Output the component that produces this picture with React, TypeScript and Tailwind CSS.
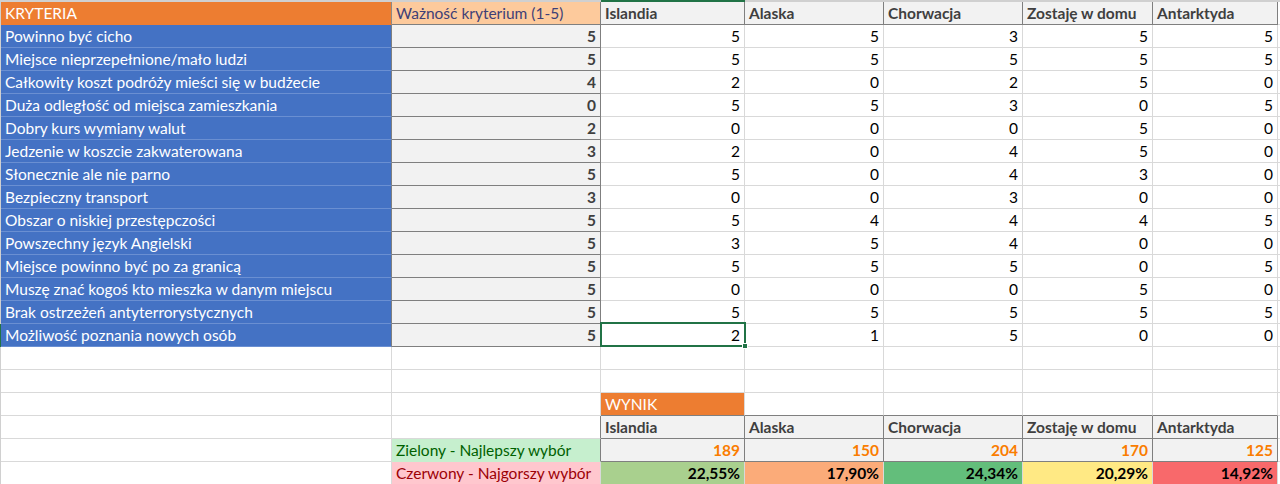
import React from "react";

// column widths incl. the 1px right border
const W = ["w-[391px]", "w-[209px]", "w-[144px]", "w-[139px]", "w-[139px]", "w-[130px]", "w-[125px]"];

const criteria: [string, number, number[]][] = [
  ["Powinno być cicho", 5, [5, 5, 3, 5, 5]],
  ["Miejsce nieprzepełnione/mało ludzi", 5, [5, 5, 5, 5, 5]],
  ["Całkowity koszt podróży mieści się w budżecie", 4, [2, 0, 2, 5, 0]],
  ["Duża odległość od miejsca zamieszkania", 0, [5, 5, 3, 0, 5]],
  ["Dobry kurs wymiany walut", 2, [0, 0, 0, 5, 0]],
  ["Jedzenie w koszcie zakwaterowana", 3, [2, 0, 4, 5, 0]],
  ["Słonecznie ale nie parno", 5, [5, 0, 4, 3, 0]],
  ["Bezpieczny transport", 3, [0, 0, 3, 0, 0]],
  ["Obszar o niskiej przestępczości", 5, [5, 4, 4, 4, 5]],
  ["Powszechny język Angielski", 5, [3, 5, 4, 0, 0]],
  ["Miejsce powinno być po za granicą", 5, [5, 5, 5, 0, 5]],
  ["Muszę znać kogoś kto mieszka w danym miejscu", 5, [0, 0, 0, 5, 0]],
  ["Brak ostrzeżeń antyterrorystycznych", 5, [5, 5, 5, 5, 5]],
  ["Możliwość poznania nowych osób", 5, [2, 1, 5, 0, 0]],
];

const places = ["Islandia", "Alaska", "Chorwacja", "Zostaję w domu", "Antarktyda"];
const scores = [189, 150, 204, 170, 125];
const percents: [string, string][] = [
  ["22,55%", "bg-[#a9d08e]"],
  ["17,90%", "bg-[#fbab79]"],
  ["24,34%", "bg-[#63be7b]"],
  ["20,29%", "bg-[#ffe984]"],
  ["14,92%", "bg-[#f8696b]"],
];

const base = "shrink-0 h-full flex items-center px-[4px] pt-[2px] border-r border-b whitespace-nowrap overflow-hidden";
const grid = "bg-white border-[#d9d9d9]";
const output = "bg-[#f2f2f2] border-[#7f7f7f] font-bold text-[#3f3f3f]";

function Cell({ col, cls, children }: { col: number; cls: string; children?: React.ReactNode }) {
  return <div className={`${base} ${W[col]} ${cls}`}>{children}</div>;
}

function Row({ gutter = "bg-[#d0d0d0]", children }: { gutter?: string; children: React.ReactNode }) {
  return (
    <div className="flex h-[23px]">
      <div className={`w-[1px] shrink-0 ${gutter}`} />
      {children}
      <div className="flex-1 border-b border-[#d9d9d9]" />
    </div>
  );
}

export default function App() {
  return (
    <div className="relative w-[1280px] h-[484px] overflow-hidden bg-white text-[15.5px] leading-none text-black font-['Lato',sans-serif]">
      {/* column header edge */}
      <div className="flex h-[2px]">
        <div className="w-[601px] bg-[#d0d0d0]" />
        <div className="w-[144px] bg-[#217346]" />
        <div className="flex-1 bg-[#d0d0d0]" />
      </div>

      <Row>
        <Cell col={0} cls="bg-[#ed7d31] border-b-[#ed7d31] border-r-[#8a8a8a] text-white">KRYTERIA</Cell>
        <Cell col={1} cls="bg-[#fdca9c] border-[#7f7f7f] text-[#3f3f76]">Ważność kryterium (1-5)</Cell>
        {places.map((p, i) => (
          <Cell key={p} col={i + 2} cls={output}>{p}</Cell>
        ))}
      </Row>

      {criteria.map(([name, weight, vals], r) => (
        <Row key={name} gutter={r === 13 ? "bg-[#217346]" : "bg-[#d0d0d0]"}>
          <Cell col={0} cls="bg-[#4472c4] border-b-[#6a8fd2] border-r-[#7f7f7f] text-white">{name}</Cell>
          <Cell col={1} cls={`${output} justify-end`}>{weight}</Cell>
          {vals.map((v, i) => (
            <Cell key={i} col={i + 2} cls={`${grid} justify-end`}>{v}</Cell>
          ))}
        </Row>
      ))}

      {/* empty rows */}
      {[0, 1].map((k) => (
        <Row key={k}>
          <Cell col={0} cls={grid} />
          <Cell col={1} cls={grid} />
          {places.map((p, i) => (
            <Cell key={p} col={i + 2} cls={grid} />
          ))}
        </Row>
      ))}

      <Row>
        <Cell col={0} cls={grid} />
        <Cell col={1} cls={grid} />
        <Cell col={2} cls="bg-[#ed7d31] border-b-[#7f7f7f] border-r-[#d9d9d9] text-white">WYNIK</Cell>
        {places.slice(1).map((p, i) => (
          <Cell key={p} col={i + 3} cls="bg-white border-r-[#d9d9d9] border-b-[#7f7f7f]" />
        ))}
      </Row>

      <Row>
        <Cell col={0} cls={grid} />
        <Cell col={1} cls="bg-white border-b-[#d9d9d9] border-r-[#7f7f7f]" />
        {places.map((p, i) => (
          <Cell key={p} col={i + 2} cls={output}>{p}</Cell>
        ))}
      </Row>

      <Row>
        <Cell col={0} cls={grid} />
        <Cell col={1} cls="bg-[#c6efce] border-b-[#c6efce] border-r-[#7f7f7f] text-[#006100]">Zielony - Najlepszy wybór</Cell>
        {scores.map((s, i) => (
          <Cell key={i} col={i + 2} cls="bg-[#f2f2f2] border-[#7f7f7f] justify-end font-bold text-[#fa7d00]">{s}</Cell>
        ))}
      </Row>

      <Row>
        <Cell col={0} cls={grid} />
        <Cell col={1} cls="bg-[#ffc7ce] border-b-[#d9d9d9] border-r-[#d9d9d9] text-[#9c0006]">Czerwony - Najgorszy wybór</Cell>
        {percents.map(([t, bg], i) => (
          <Cell key={i} col={i + 2} cls={`${bg} border-[#d9d9d9] justify-end font-bold`}>{t}</Cell>
        ))}
      </Row>

      {/* active cell selection */}
      <div className="absolute left-[600px] top-[322px] w-[146px] h-[25px] border-2 border-[#217346]">
        <div className="absolute -right-[4px] -bottom-[4px] w-[6px] h-[6px] bg-[#217346] border border-white" />
      </div>
    </div>
  );
}
